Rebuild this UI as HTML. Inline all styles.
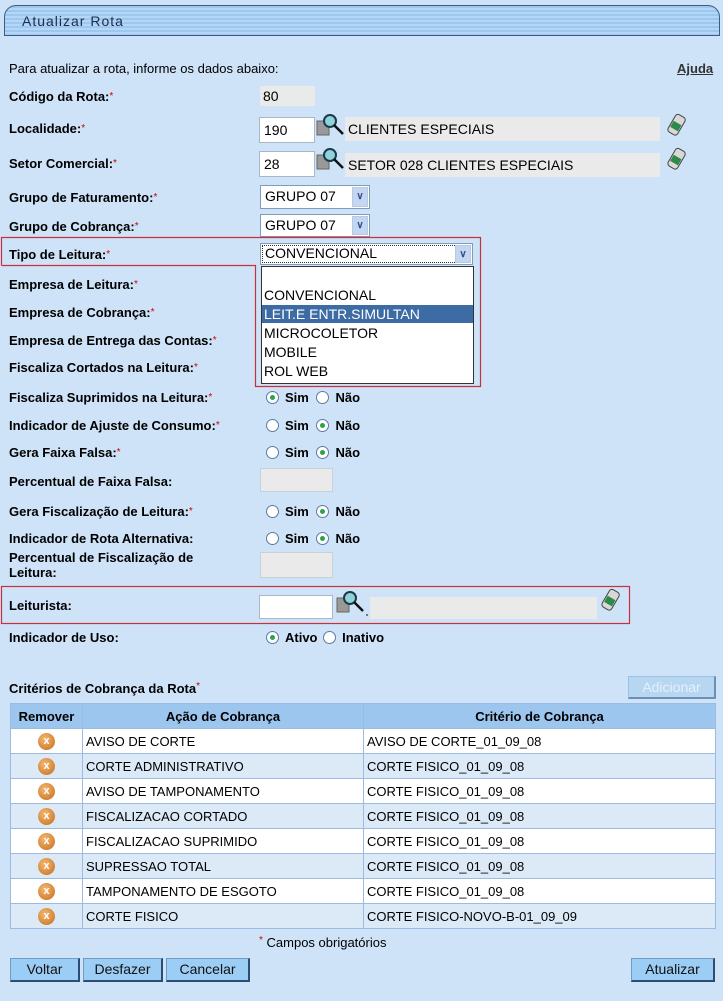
<!DOCTYPE html>
<html><head><meta charset="utf-8">
<style>
*{margin:0;padding:0;box-sizing:border-box}
body{width:723px;height:1001px;background:#cee3f8;font-family:"Liberation Sans",Arial,sans-serif;position:relative;overflow:hidden;color:#000}
.a{position:absolute;white-space:nowrap}
.l{position:absolute;left:9px;font-size:13px;font-weight:bold;line-height:15px}
.r{color:#c00;font-weight:normal;font-size:10px;vertical-align:top}
.in{position:absolute;background:#fff;border:1px solid #a9b8c8;font-size:14px;padding-left:4px;line-height:22px}
.ro{position:absolute;background:#eaeaea;font-size:14px;padding-left:3px}
.sel{position:absolute;background:#fff;border:1px solid #7f9db9;font-size:14px;padding-left:4px;line-height:20px}
.sel .b{position:absolute;right:1px;top:1px;width:16px;bottom:1px;background:#c5d7f0;border:1px solid #b7c9e8;color:#2f4f8f;font-size:10px;font-weight:bold;text-align:center;line-height:17px}
.rad{position:absolute;font-size:13px;font-weight:bold}
.c{display:inline-block;width:13px;height:13px;border:1px solid #5b7ba3;border-radius:50%;background:#fff;vertical-align:-2px;position:relative;margin-right:6px}
.c.on::after{content:"";position:absolute;left:3px;top:3px;width:5px;height:5px;border-radius:50%;background:#2ea24a}
.btn{position:absolute;background:#9bcdf5;border:1px solid #6f9bc4;border-right:2px solid #2b4d73;border-bottom:2px solid #2b4d73;font-size:14px;text-align:center;line-height:20px;color:#111}
table{position:absolute;left:10px;top:703px;width:706px;border-collapse:collapse;font-size:13px}
td,th{border:1px solid #9cbbe0;height:25px}
th{background:#9dc6ee;font-weight:bold;font-size:13px}
td{padding-left:3px}
tr.w td{background:#fff}tr.g td{background:#dce9f7}
.x{display:inline-block;width:17px;height:17px;border-radius:50%;background:radial-gradient(circle at 40% 35%,#f3b872,#c66c1a);color:#fff;font-size:11px;font-weight:bold;line-height:17px;text-align:center;vertical-align:middle}
.opt{position:absolute;left:264px;font-size:14px}
</style></head><body>
<div class="a" style="left:4px;top:5px;width:716px;height:31px;border:1px solid #3b5c86;border-radius:12px 12px 0 0;background:repeating-linear-gradient(#9cc7ef 0 2px,#b5d6f5 2px 4px)"></div>
<div class="a" style="left:22px;top:13px;font-size:14px;letter-spacing:1px;color:#1c2d4f">Atualizar Rota</div>

<div class="a" style="left:9px;top:61px;font-size:13px">Para atualizar a rota, informe os dados abaixo:</div>
<div class="a" style="left:677px;top:61px;font-size:13px;font-weight:bold;text-decoration:underline;color:#333">Ajuda</div>

<div class="l" style="top:89px">Código da Rota:<span class="r">*</span></div>
<div class="ro" style="left:260px;top:86px;width:55px;height:20px;line-height:20px">80</div>

<div class="l" style="top:121px">Localidade:<span class="r">*</span></div>
<div class="in" style="left:259px;top:117px;width:56px;height:26px;line-height:24px">190</div>
<svg class="a" style="left:316px;top:113px" width="30" height="26"><rect x="1" y="8" width="12" height="14" fill="#999" stroke="#666"/><circle cx="14" cy="8" r="6" fill="#8fd2d8" stroke="#1a3a4a" stroke-width="2"/><line x1="18" y1="12" x2="27" y2="21" stroke="#111" stroke-width="2.5"/></svg>
<div class="ro" style="left:345px;top:117px;width:315px;height:24px;line-height:24px">CLIENTES ESPECIAIS</div>
<svg class="a" style="left:666px;top:113px" width="22" height="24"><g transform="rotate(30 11 12)"><rect x="5" y="2" width="11" height="20" rx="3" fill="#d8d8d8" stroke="#444"/><rect x="6" y="10" width="9" height="7" fill="#2f8a4a"/></g></svg>

<div class="l" style="top:156px">Setor Comercial:<span class="r">*</span></div>
<div class="in" style="left:259px;top:151px;width:56px;height:26px;line-height:24px">28</div>
<svg class="a" style="left:316px;top:147px" width="30" height="26"><rect x="1" y="8" width="12" height="14" fill="#999" stroke="#666"/><circle cx="14" cy="8" r="6" fill="#8fd2d8" stroke="#1a3a4a" stroke-width="2"/><line x1="18" y1="12" x2="27" y2="21" stroke="#111" stroke-width="2.5"/></svg>
<div class="ro" style="left:345px;top:153px;width:315px;height:24px;line-height:24px">SETOR 028 CLIENTES ESPECIAIS</div>
<svg class="a" style="left:666px;top:147px" width="22" height="24"><g transform="rotate(30 11 12)"><rect x="5" y="2" width="11" height="20" rx="3" fill="#d8d8d8" stroke="#444"/><rect x="6" y="10" width="9" height="7" fill="#2f8a4a"/></g></svg>

<div class="l" style="top:190px">Grupo de Faturamento:<span class="r">*</span></div>
<div class="sel" style="left:260px;top:185px;width:110px;height:24px">GRUPO 07<div class="b">&#8744;</div></div>
<div class="l" style="top:219px">Grupo de Cobrança:<span class="r">*</span></div>
<div class="sel" style="left:260px;top:214px;width:110px;height:23px">GRUPO 07<div class="b">&#8744;</div></div>

<div class="l" style="top:247px">Tipo de Leitura:<span class="r">*</span></div>
<div class="l" style="top:277px">Empresa de Leitura:<span class="r">*</span></div>
<div class="l" style="top:305px">Empresa de Cobrança:<span class="r">*</span></div>
<div class="l" style="top:333px">Empresa de Entrega das Contas:<span class="r">*</span></div>
<div class="l" style="top:360px">Fiscaliza Cortados na Leitura:<span class="r">*</span></div>
<div class="l" style="top:390px">Fiscaliza Suprimidos na Leitura:<span class="r">*</span></div>
<div class="l" style="top:418px">Indicador de Ajuste de Consumo:<span class="r">*</span></div>
<div class="l" style="top:445px">Gera Faixa Falsa:<span class="r">*</span></div>
<div class="l" style="top:474px">Percentual de Faixa Falsa:</div>
<div class="l" style="top:504px">Gera Fiscalização de Leitura:<span class="r">*</span></div>
<div class="l" style="top:531px">Indicador de Rota Alternativa:</div>
<div class="l" style="top:550px">Percentual de Fiscalização de<br>Leitura:</div>
<div class="l" style="top:598px">Leiturista:</div>
<div class="l" style="top:630px">Indicador de Uso:</div>

<div class="sel" style="left:260px;top:243px;width:213px;height:22px;line-height:19px;outline:1px dotted #333;outline-offset:-3px">CONVENCIONAL<div class="b">&#8744;</div></div>
<div class="a" style="left:261px;top:266px;width:213px;height:118px;background:#fff;border:1px solid #333"></div>
<div class="a" style="left:262px;top:305px;width:211px;height:18px;background:#3d6ba3"></div>
<div class="opt" style="top:287px">CONVENCIONAL</div>
<div class="opt" style="top:306px;color:#fff">LEIT.E ENTR.SIMULTAN</div>
<div class="opt" style="top:325px">MICROCOLETOR</div>
<div class="opt" style="top:344px">MOBILE</div>
<div class="opt" style="top:363px">ROL WEB</div>
<svg class="a" style="left:0;top:0" width="723" height="1001"><polyline points="1.5,265.5 1.5,237.5 480.5,237.5 480.5,386.5 255.5,386.5 255.5,265.5 1.5,265.5" fill="none" stroke="#c8303c" stroke-width="1.2"/><rect x="1.5" y="586.5" width="628" height="37" fill="none" stroke="#c8303c" stroke-width="1.2"/></svg>

<div class="rad" style="left:266px;top:390px"><span class="c on"></span>Sim <span class="c" style="margin-left:4px"></span>Não</div>
<div class="rad" style="left:266px;top:418px"><span class="c"></span>Sim <span class="c on" style="margin-left:4px"></span>Não</div>
<div class="rad" style="left:266px;top:445px"><span class="c"></span>Sim <span class="c on" style="margin-left:4px"></span>Não</div>
<div class="ro" style="left:260px;top:468px;width:73px;height:24px;border:1px solid #c7cfd8"></div>
<div class="rad" style="left:266px;top:504px"><span class="c"></span>Sim <span class="c on" style="margin-left:4px"></span>Não</div>
<div class="rad" style="left:266px;top:531px"><span class="c"></span>Sim <span class="c on" style="margin-left:4px"></span>Não</div>
<div class="ro" style="left:260px;top:552px;width:73px;height:26px;border:1px solid #c7cfd8"></div>

<div class="in" style="left:259px;top:595px;width:74px;height:24px"></div>
<svg class="a" style="left:336px;top:590px" width="32" height="28"><rect x="1" y="8" width="12" height="14" fill="#999" stroke="#666"/><circle cx="14" cy="8" r="6" fill="#8fd2d8" stroke="#1a3a4a" stroke-width="2"/><line x1="18" y1="12" x2="27" y2="21" stroke="#111" stroke-width="2.5"/><line x1="30" y1="25" x2="32" y2="25" stroke="#111"/></svg>
<div class="ro" style="left:370px;top:597px;width:227px;height:22px"></div>
<svg class="a" style="left:600px;top:588px" width="22" height="24"><g transform="rotate(30 11 12)"><rect x="5" y="2" width="11" height="20" rx="3" fill="#d8d8d8" stroke="#444"/><rect x="6" y="10" width="9" height="7" fill="#2f8a4a"/></g></svg>
<div class="rad" style="left:266px;top:630px"><span class="c on"></span>Ativo <span class="c" style="margin-left:2px"></span>Inativo</div>

<div class="a" style="left:9px;top:681px;font-size:13px;font-weight:bold">Critérios de Cobrança da Rota<span class="r">*</span></div>
<div class="a" style="left:628px;top:676px;width:88px;height:23px;background:#b7d6f1;border:1px solid #9fc0df;border-right:2px solid #6d8fb3;border-bottom:2px solid #6d8fb3;color:#e6f0fa;font-size:14px;text-align:center;line-height:20px">Adicionar</div>

<table>
<tr><th style="width:72px">Remover</th><th style="width:281px">Ação de Cobrança</th><th>Critério de Cobrança</th></tr>
<tr class="w"><td style="text-align:center;padding:0"><span class="x">x</span></td><td>AVISO DE CORTE</td><td>AVISO DE CORTE_01_09_08</td></tr>
<tr class="g"><td style="text-align:center;padding:0"><span class="x">x</span></td><td>CORTE ADMINISTRATIVO</td><td>CORTE FISICO_01_09_08</td></tr>
<tr class="w"><td style="text-align:center;padding:0"><span class="x">x</span></td><td>AVISO DE TAMPONAMENTO</td><td>CORTE FISICO_01_09_08</td></tr>
<tr class="g"><td style="text-align:center;padding:0"><span class="x">x</span></td><td>FISCALIZACAO CORTADO</td><td>CORTE FISICO_01_09_08</td></tr>
<tr class="w"><td style="text-align:center;padding:0"><span class="x">x</span></td><td>FISCALIZACAO SUPRIMIDO</td><td>CORTE FISICO_01_09_08</td></tr>
<tr class="g"><td style="text-align:center;padding:0"><span class="x">x</span></td><td>SUPRESSAO TOTAL</td><td>CORTE FISICO_01_09_08</td></tr>
<tr class="w"><td style="text-align:center;padding:0"><span class="x">x</span></td><td>TAMPONAMENTO DE ESGOTO</td><td>CORTE FISICO_01_09_08</td></tr>
<tr class="g"><td style="text-align:center;padding:0"><span class="x">x</span></td><td>CORTE FISICO</td><td>CORTE FISICO-NOVO-B-01_09_09</td></tr>
</table>

<div class="a" style="left:259px;top:935px;font-size:13px"><span class="r">*</span> Campos obrigatórios</div>
<div class="btn" style="left:10px;top:958px;width:70px;height:24px">Voltar</div>
<div class="btn" style="left:83px;top:958px;width:80px;height:24px">Desfazer</div>
<div class="btn" style="left:166px;top:958px;width:84px;height:24px">Cancelar</div>
<div class="btn" style="left:631px;top:958px;width:84px;height:24px">Atualizar</div>
</body></html>
